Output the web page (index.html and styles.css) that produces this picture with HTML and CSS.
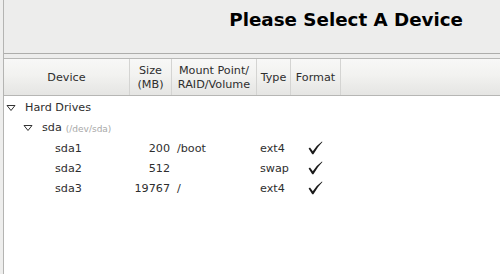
FILE: index.html
```html
<!DOCTYPE html>
<html>
<head>
<meta charset="utf-8">
<link rel="stylesheet" href="styles.css">
</head>
<body>
<div class="frame">
  <div class="top">
    <h1 class="title">Please Select A Device</h1>
  </div>
  <div class="gap"></div>
  <div class="table">
    <div class="head">
      <div class="hc c-dev">Device</div>
      <div class="hc c-size">Size<br>(MB)</div>
      <div class="hc c-mount">Mount Point/<br>RAID/Volume</div>
      <div class="hc c-type">Type</div>
      <div class="hc c-fmt">Format</div>
      <div class="hc c-rest"></div>
    </div>
    <div class="body">
      <div class="row r-group">
        <svg class="tri" width="10" height="8" viewBox="0 0 10 8"><path d="M1 1.5 L9 1.5 L5 6.5 Z" fill="none" stroke="#333" stroke-width="1"/></svg>
        <span>Hard Drives</span>
      </div>
      <div class="row r-disk">
        <svg class="tri" width="10" height="8" viewBox="0 0 10 8"><path d="M1 1.5 L9 1.5 L5 6.5 Z" fill="none" stroke="#333" stroke-width="1"/></svg>
        <span>sda</span><span class="dev">(/dev/sda)</span>
      </div>
      <div class="row r-part">
        <span class="d-name">sda1</span><span class="d-size">200</span><span class="d-mount">/boot</span><span class="d-type">ext4</span>
        <svg class="chk" width="15" height="14" viewBox="0 0 15 14"><path d="M0.6 7.6 L2 6.6 L4.8 10.2 Q8.5 4.5 14 0.6 L14.4 1.1 Q9.5 6 5.4 13.2 L4.2 13.2 Z" fill="#1a1a1a"/></svg>
      </div>
      <div class="row r-part">
        <span class="d-name">sda2</span><span class="d-size">512</span><span class="d-mount"></span><span class="d-type">swap</span>
        <svg class="chk" width="15" height="14" viewBox="0 0 15 14"><path d="M0.6 7.6 L2 6.6 L4.8 10.2 Q8.5 4.5 14 0.6 L14.4 1.1 Q9.5 6 5.4 13.2 L4.2 13.2 Z" fill="#1a1a1a"/></svg>
      </div>
      <div class="row r-part">
        <span class="d-name">sda3</span><span class="d-size">19767</span><span class="d-mount">/</span><span class="d-type">ext4</span>
        <svg class="chk" width="15" height="14" viewBox="0 0 15 14"><path d="M0.6 7.6 L2 6.6 L4.8 10.2 Q8.5 4.5 14 0.6 L14.4 1.1 Q9.5 6 5.4 13.2 L4.2 13.2 Z" fill="#1a1a1a"/></svg>
      </div>
    </div>
  </div>
</div>
</body>
</html>
```
FILE: styles.css
```css
html, body {
  margin: 0;
  padding: 0;
  height: 100%;
}
body {
  background: #eeeeed;
  font-family: "DejaVu Sans", sans-serif;
  color: #2e2e2e;
  font-size: 11.2px;
}
.frame {
  margin-left: 3px;
  border-left: 1px solid #b4b4b2;
  height: 274px;
  display: flex;
  flex-direction: column;
  box-sizing: border-box;
}
.top {
  height: 53px;
  border-bottom: 1px solid #adadab;
  background: #ededec;
  display: flex;
  justify-content: flex-end;
  align-items: flex-start;
}
.title {
  margin: 9px 37px 0 0;
  font-size: 18.3px;
  font-weight: bold;
  color: #000;
}
.gap {
  height: 4px;
  background: #ededec;
}
.table {
  flex: 1;
  border-top: 1px solid #b8b8b6;
  background: #fff;
  display: flex;
  flex-direction: column;
}
.head {
  height: 36px;
  display: flex;
  background: linear-gradient(#f8f8f7, #f2f2f0 45%, #e5e5e3);
  border-bottom: 1px solid #b6b6b4;
}
.hc {
  display: flex;
  align-items: center;
  justify-content: center;
  text-align: center;
  line-height: 14px;
  padding-top: 2px;
  border-right: 1px solid #d4d4d2;
  box-sizing: border-box;
}
.c-dev { width: 126px; }
.c-size { width: 42px; }
.c-mount { width: 85px; }
.c-type { width: 34px; }
.c-fmt { width: 50px; }
.c-rest { flex: 1; border-right: none; }
.body {
  padding-top: 2px;
}
.row {
  display: flex;
  align-items: center;
  height: 20px;
  white-space: nowrap;
}
.r-group { padding-left: 2px; height: 19px; }
.r-disk { padding-left: 19px; height: 21px; }
.tri { margin-right: 9px; }
.dev {
  font-size: 9px;
  color: #a8a8a8;
  margin-left: 4px;
  padding-top: 2px;
}
.r-part { padding-left: 51px; }
.d-name { width: 50px; }
.d-size { width: 65px; text-align: right; }
.d-mount { width: 83px; padding-left: 7px; }
.d-type { width: 48px; }
.chk { display: block; }
```
